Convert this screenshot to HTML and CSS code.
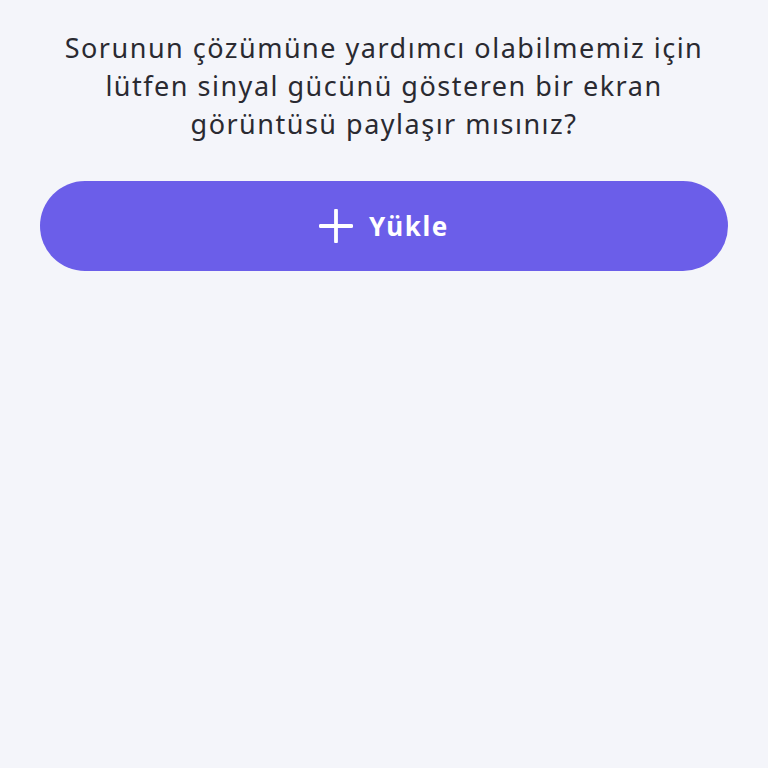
FILE: index.html
```html
<!DOCTYPE html>
<html lang="tr">
<head>
<meta charset="utf-8">
<link rel="stylesheet" href="styles.css">
</head>
<body>
<main class="page">
  <p class="prompt">Sorunun çözümüne yardımcı olabilmemiz için<br>lütfen sinyal gücünü gösteren bir ekran<br>görüntüsü paylaşır mısınız?</p>
  <button class="upload" type="button">
    <svg class="plus" viewBox="0 0 34 34" width="34" height="34" aria-hidden="true">
      <path d="M17 1.5V32.5M1.5 17H32.5" stroke="#fff" stroke-width="3.8" stroke-linecap="round" fill="none"/>
    </svg>
    <span class="label">Yükle</span>
  </button>
</main>
</body>
</html>
```
FILE: styles.css
```css
html, body {
  margin: 0;
  padding: 0;
  background: #f4f5fa;
}
.page {
  display: flex;
  flex-direction: column;
  align-items: center;
  padding: 29px 40px 0;
  font-family: "Noto Sans", sans-serif;
}
.prompt {
  margin: 0;
  width: 688px;
  text-align: center;
  font-size: 27px;
  line-height: 38px;
  color: #2a2a31;
  letter-spacing: 1.5px;
}
.upload {
  margin-top: 38px;
  width: 688px;
  height: 90px;
  border: none;
  border-radius: 45px;
  background: #6b5ee9;
  display: flex;
  align-items: center;
  justify-content: center;
  gap: 16px;
  font-family: "Noto Sans", sans-serif;
  color: #fff;
  padding: 0;
}
.label {
  font-size: 26px;
  font-weight: 700;
  letter-spacing: 1.6px;
}
.plus {
  display: block;
}
```
